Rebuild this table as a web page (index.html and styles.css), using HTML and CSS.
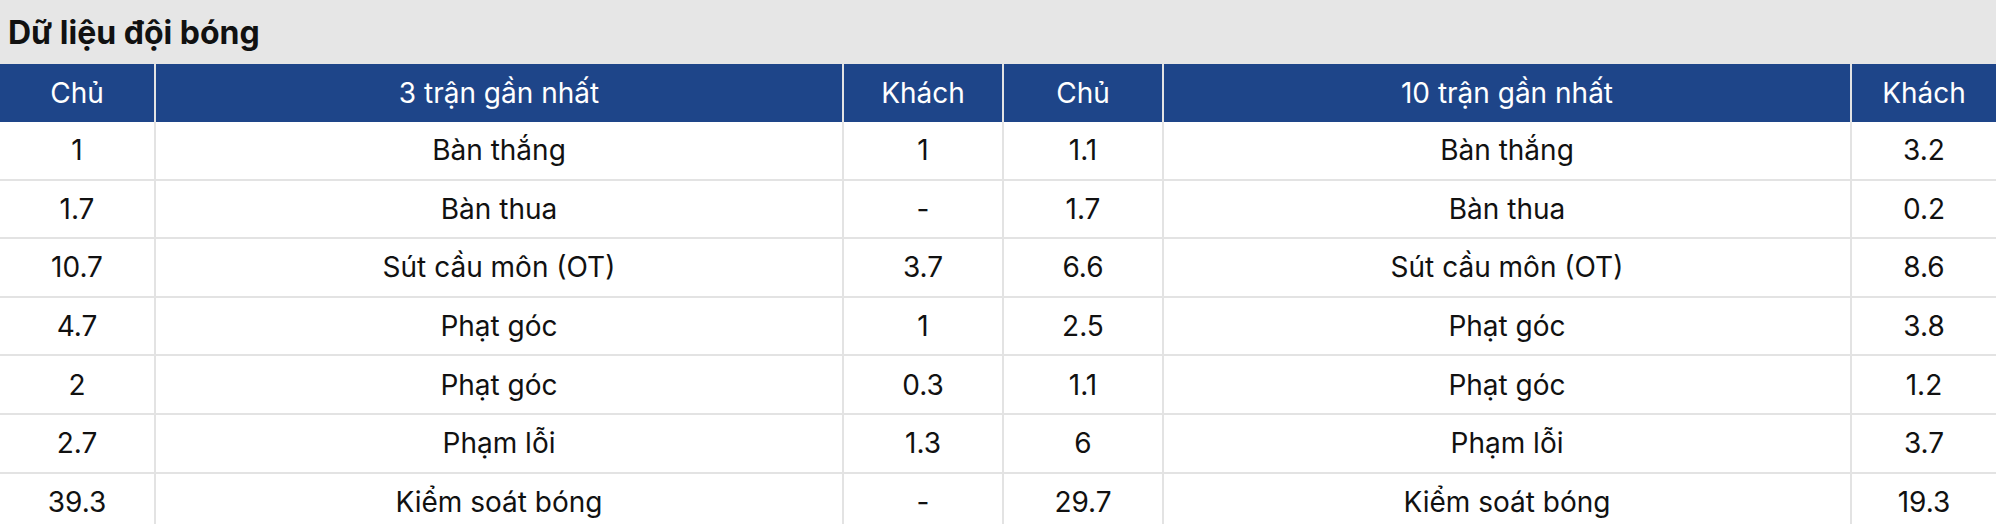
FILE: index.html
```html
<!DOCTYPE html>
<html lang="vi">
<head>
<meta charset="utf-8">
<title>Dữ liệu đội bóng</title>
<link rel="stylesheet" href="styles.css">
</head>
<body>
<section class="panel">
  <h2 class="panel-title">Dữ liệu đội bóng</h2>
  <table class="stats">
    <colgroup>
      <col class="c-side1">
      <col class="c-label">
      <col class="c-side">
      <col class="c-side">
      <col class="c-label">
      <col class="c-last">
    </colgroup>
    <thead>
      <tr>
        <th>Chủ</th>
        <th>3 trận gần nhất</th>
        <th>Khách</th>
        <th>Chủ</th>
        <th>10 trận gần nhất</th>
        <th>Khách</th>
      </tr>
    </thead>
    <tbody>
      <tr><td>1</td><td>Bàn thắng</td><td>1</td><td>1.1</td><td>Bàn thắng</td><td>3.2</td></tr>
      <tr><td>1.7</td><td>Bàn thua</td><td>-</td><td>1.7</td><td>Bàn thua</td><td>0.2</td></tr>
      <tr><td>10.7</td><td>Sút cầu môn (OT)</td><td>3.7</td><td>6.6</td><td>Sút cầu môn (OT)</td><td>8.6</td></tr>
      <tr><td>4.7</td><td>Phạt góc</td><td>1</td><td>2.5</td><td>Phạt góc</td><td>3.8</td></tr>
      <tr><td>2</td><td>Phạt góc</td><td>0.3</td><td>1.1</td><td>Phạt góc</td><td>1.2</td></tr>
      <tr><td>2.7</td><td>Phạm lỗi</td><td>1.3</td><td>6</td><td>Phạm lỗi</td><td>3.7</td></tr>
      <tr><td>39.3</td><td>Kiểm soát bóng</td><td>-</td><td>29.7</td><td>Kiểm soát bóng</td><td>19.3</td></tr>
    </tbody>
  </table>
</section>
</body>
</html>
```

FILE: styles.css
```css
html, body {
  margin: 0;
  padding: 0;
  background: #ffffff;
}

body {
  font-family: Inter, "Noto Sans", "DejaVu Sans", sans-serif;
  color: #111111;
}

.panel {
  width: 1996px;
}

.panel-title {
  margin: 0;
  height: 64px;
  display: flex;
  align-items: center;
  padding-left: 8px;
  background: #e6e6e6;
  font-size: 32px;
  font-weight: 700;
  color: #111111;
}

.stats {
  width: 1996px;
  border-collapse: separate;
  border-spacing: 0;
  table-layout: fixed;
}

.c-side1 { width: 156px; }
.c-label { width: 688px; }
.c-side { width: 160px; }
.c-last { width: 144px; }

.stats th {
  height: 58px;
  padding: 0;
  background: #1e4589;
  color: #ffffff;
  font-weight: 400;
  font-size: 28px;
  text-align: center;
  vertical-align: middle;
  border-right: 2px solid #e3e3e3;
}

.stats td {
  height: 56.6px;
  padding: 0;
  font-size: 28px;
  text-align: center;
  vertical-align: middle;
  color: #111111;
  border-right: 2px solid #e3e3e3;
  border-bottom: 2px solid #e3e3e3;
}

.stats th:last-child,
.stats td:last-child {
  border-right: none;
}
```
